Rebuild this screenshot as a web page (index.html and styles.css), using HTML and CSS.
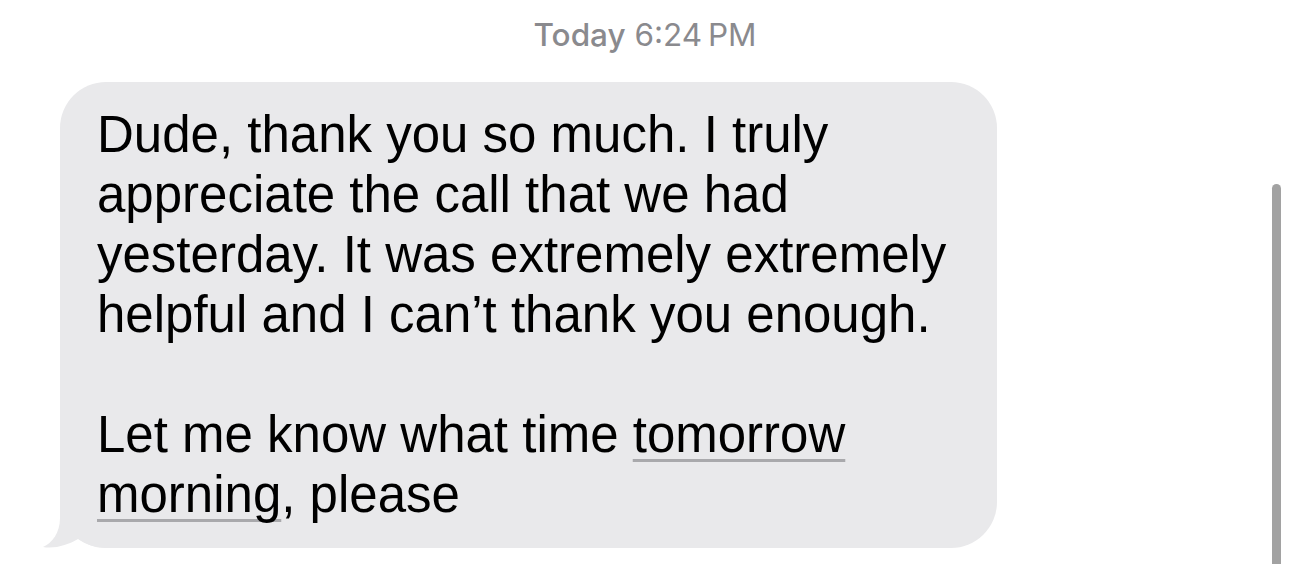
FILE: index.html
```html
<!DOCTYPE html>
<html>
<head>
<meta charset="utf-8">
<link rel="stylesheet" href="styles.css">
</head>
<body>
<div class="thread">
  <div class="stamp"><span class="day">Today</span> 6:24&#8201;PM</div>
  <div class="row">
    <div class="bubble">
      <svg class="tail" width="70" height="62" viewBox="0 0 70 62"><path d="M20 0 L20 30 C20 45 12 55 3 59 C15 61 28 57 38 51 C45 56 55 60 70 60 L70 0 Z" fill="#e9e9eb"/></svg>
      <p class="msg">Dude, thank you so much. I truly<br>appreciate the call that we had<br>yesterday. It was extremely extremely<br>helpful and I can’t thank you enough.</p>
      <p class="msg">Let me know what time <span class="link">tomorrow</span><br><span class="link">morning</span>, please</p>
    </div>
  </div>
</div>
<div class="scroll"></div>
</body>
</html>
```
FILE: styles.css
```css
html, body {
  margin: 0;
  padding: 0;
  background: #ffffff;
  width: 1290px;
  height: 564px;
  overflow: hidden;
}
.thread {
  display: flex;
  flex-direction: column;
  font-family: "Liberation Sans", Arial, sans-serif;
}
.stamp {
  margin-top: 15px;
  height: 40px;
  line-height: 40px;
  font-family: Inter, "Liberation Sans", sans-serif;
  font-size: 31.5px;
  color: #8a8a8e;
  text-align: center;
}
.day {
  font-weight: 500;
}
.row {
  margin-top: 27px;
  padding-left: 60px;
  display: flex;
}
.bubble {
  position: relative;
  width: 900px;
  padding: 23px 0 23px 37px;
  background: #e9e9eb;
  border-radius: 46px;
}
.msg {
  position: relative;
  margin: 0;
  font-size: 51px;
  line-height: 60px;
  color: #000;
  white-space: nowrap;
}
.msg + .msg {
  margin-top: 60px;
}
.link {
  text-decoration: underline;
  text-decoration-color: #a9a9ac;
  text-decoration-thickness: 3px;
  text-underline-offset: 7px;
  text-decoration-skip-ink: none;
}
.tail {
  position: absolute;
  left: -20px;
  bottom: -2px;
}
.scroll {
  position: absolute;
  left: 1272px;
  top: 184px;
  width: 9px;
  height: 400px;
  background: #a2a2a2;
  border-radius: 5px 5px 0 0;
}
```
